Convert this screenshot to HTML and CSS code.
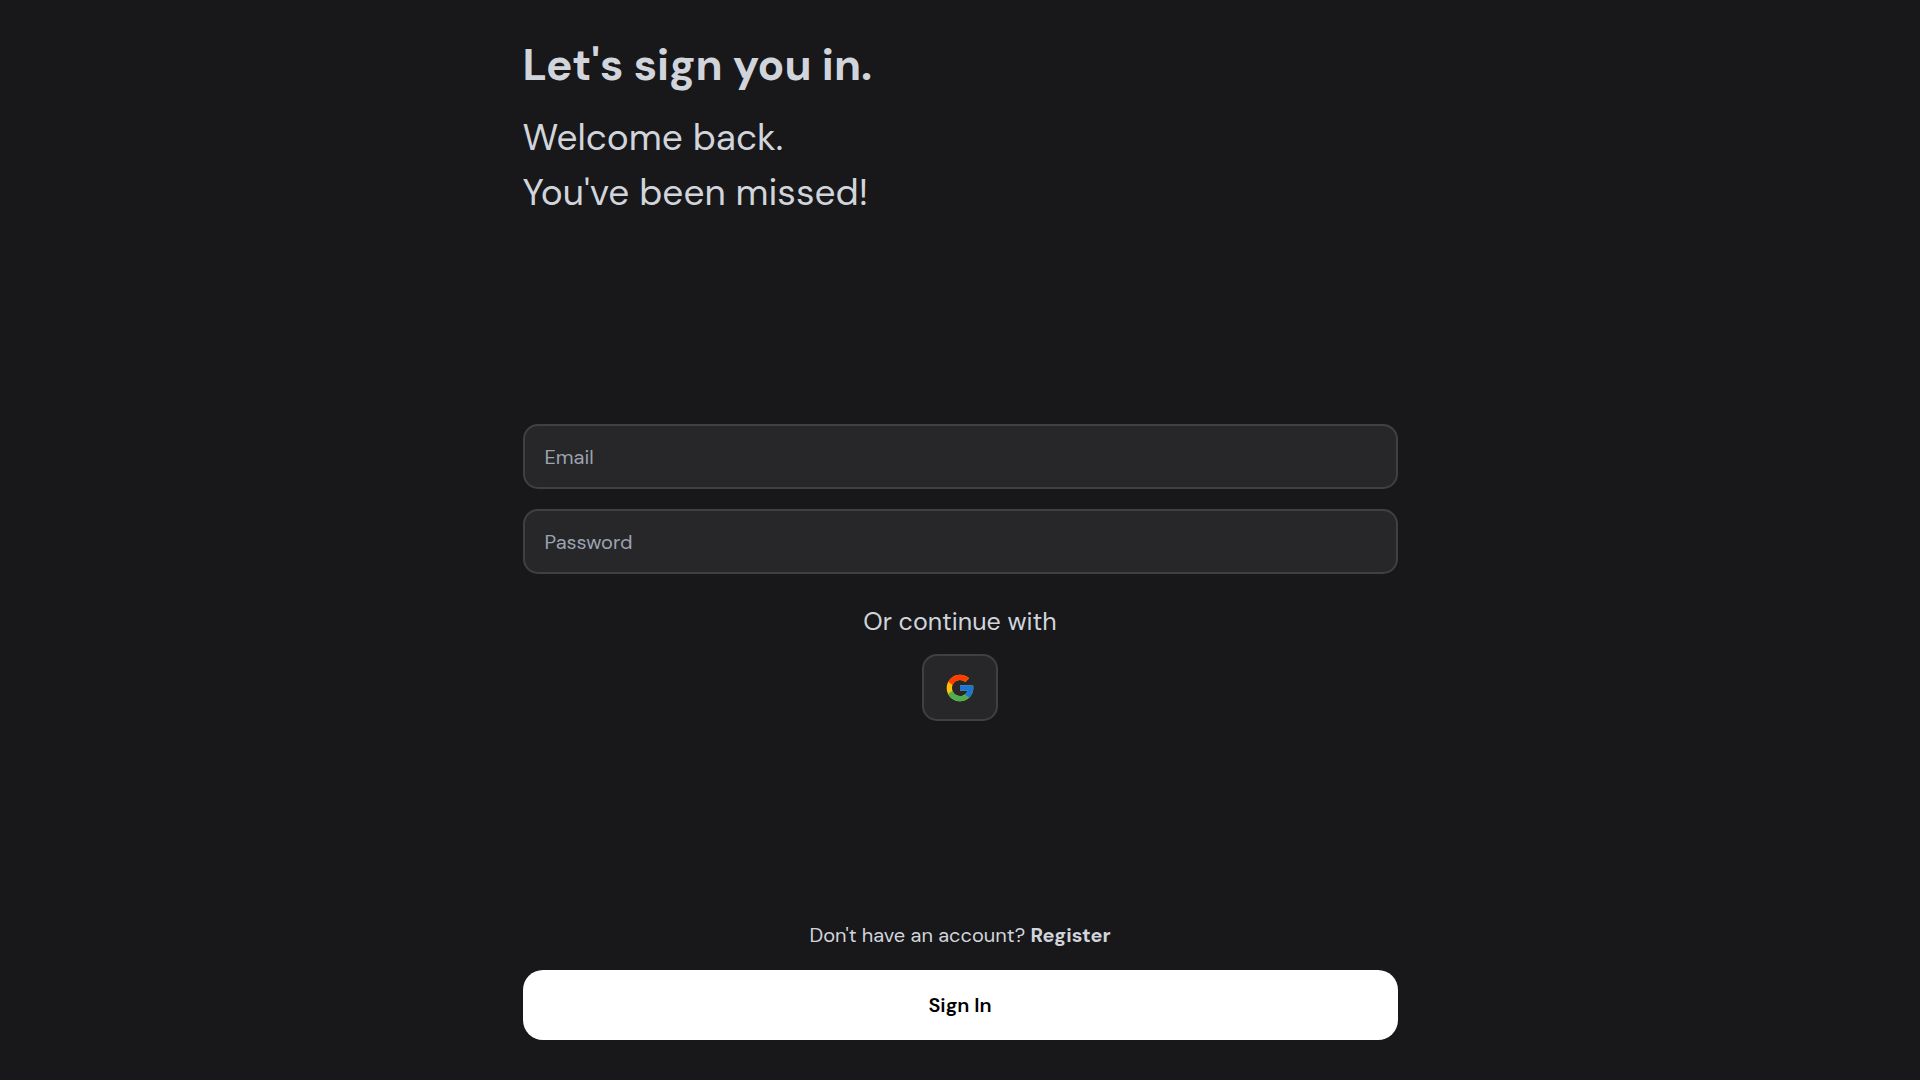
FILE: index.html
```html
<!DOCTYPE html>
<html lang="en">
<head>
  <meta charset="utf-8">
  <meta name="viewport" content="width=device-width, initial-scale=1">
  <title>Sign in</title>
  <link rel="stylesheet" href="styles.css">
</head>
<body>
  <main class="page">
    <header class="intro">
      <h1 class="title">Let's sign you in.</h1>
      <p class="welcome">Welcome back.<br>You've been missed!</p>
    </header>

    <form class="form" id="sign-in">
      <input class="field" type="email" placeholder="Email" aria-label="Email">
      <input class="field" type="password" placeholder="Password" aria-label="Password">
      <div class="social">
        <p class="social-text">Or continue with</p>
        <button class="social-button" type="button" aria-label="Google">
          <svg class="social-icon" viewBox="0 0 48 48" aria-hidden="true">
            <path fill="#FFC107" d="M43.611 20.083H42V20H24v8h11.303c-1.649 4.657-6.08 8-11.303 8-6.627 0-12-5.373-12-12s5.373-12 12-12c3.059 0 5.842 1.154 7.961 3.039l5.657-5.657C34.046 6.053 29.268 4 24 4 12.955 4 4 12.955 4 24s8.955 20 20 20 20-8.955 20-20c0-1.341-.138-2.65-.389-3.917z"/>
            <path fill="#FF3D00" d="M6.306 14.691l6.571 4.819C14.655 15.108 18.961 12 24 12c3.059 0 5.842 1.154 7.961 3.039l5.657-5.657C34.046 6.053 29.268 4 24 4 16.318 4 9.656 8.337 6.306 14.691z"/>
            <path fill="#4CAF50" d="M24 44c5.166 0 9.86-1.977 13.409-5.192l-6.19-5.238C29.211 35.091 26.715 36 24 36c-5.202 0-9.619-3.317-11.283-7.946l-6.522 5.025C9.505 39.556 16.227 44 24 44z"/>
            <path fill="#1976D2" d="M43.611 20.083H42V20H24v8h11.303c-.792 2.237-2.231 4.166-4.087 5.571l6.193 5.238C36.971 39.205 44 34 44 24c0-1.341-.138-2.65-.389-3.917z"/>
          </svg>
        </button>
      </div>
    </form>

    <footer class="actions">
      <p class="register">Don't have an account? <a class="register-link" href="#register">Register</a></p>
      <button class="submit" type="submit" form="sign-in">Sign In</button>
    </footer>
  </main>
</body>
</html>
```
FILE: styles.css
```css
* {
  box-sizing: border-box;
  margin: 0;
}

body {
  background: #18181b;
  color: #d1d5db;
  font-family: "DM Sans", Inter, sans-serif;
  font-size: 20px;
}

button,
input {
  font: inherit;
}

.page {
  display: flex;
  flex-direction: column;
  justify-content: space-between;
  width: 100%;
  max-width: 875px;
  min-height: 100vh;
  margin: 0 auto;
  padding: 40px 0;
}

.intro {
  display: grid;
  gap: 20px;
}

.title {
  font-size: 44px;
  font-weight: 700;
  line-height: 50px;
}

.welcome {
  font-size: 37px;
  line-height: 55px;
}

.form {
  display: grid;
  gap: 20px;
}

.field {
  width: 100%;
  height: 65px;
  padding: 0 20px;
  border: 2px solid #3f3f46;
  border-radius: 15px;
  background: #27272a;
  color: inherit;
}

.field::placeholder {
  color: #9ca3af;
  opacity: 1;
}

.social {
  display: flex;
  flex-direction: column;
  align-items: center;
  gap: 15px;
  padding-top: 10px;
}

.social-text {
  font-size: 25px;
  line-height: 35px;
}

.social-button {
  display: flex;
  align-items: center;
  justify-content: center;
  width: 76px;
  height: 67px;
  padding: 0;
  border: 2px solid #3f3f46;
  border-radius: 15px;
  background: #27272a;
}

.social-icon {
  width: 32px;
  height: 32px;
}

.actions {
  display: grid;
  gap: 25px;
}

.register {
  line-height: 20px;
  text-align: center;
}

.register-link {
  color: inherit;
  font-weight: 700;
  text-decoration: none;
}

.submit {
  height: 70px;
  border: 0;
  border-radius: 20px;
  background: #fff;
  color: #000;
  font-weight: 600;
}
```
